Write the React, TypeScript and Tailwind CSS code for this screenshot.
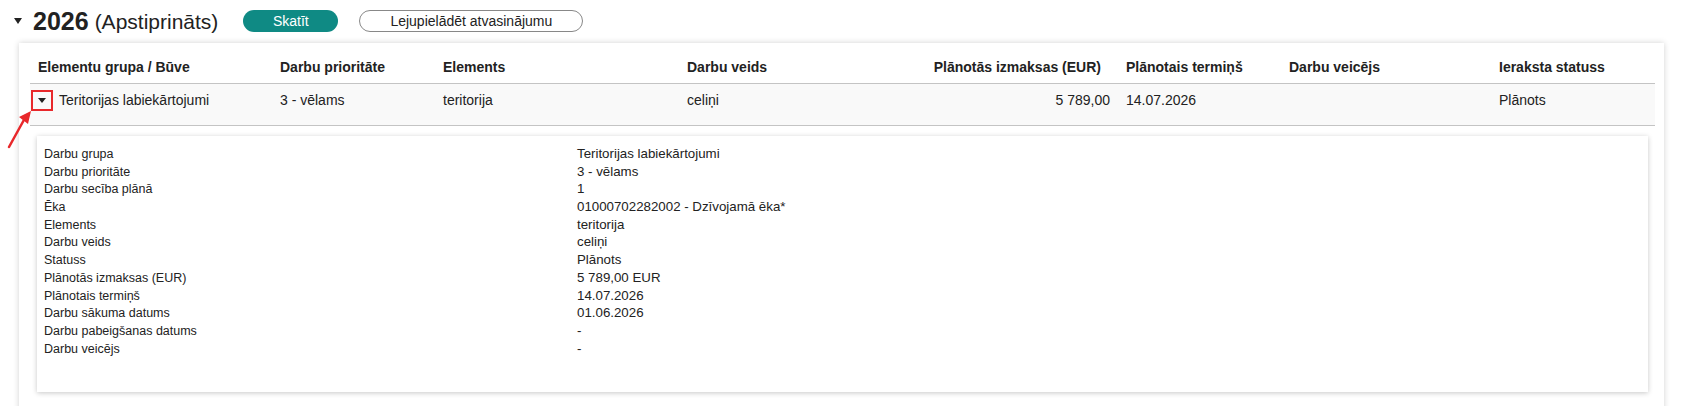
import React from 'react';

type Col = { title: string; align?: 'right' };

const columns: Col[] = [
  { title: 'Elementu grupa / Būve' },
  { title: 'Darbu prioritāte' },
  { title: 'Elements' },
  { title: 'Darbu veids' },
  { title: 'Plānotās izmaksas (EUR)', align: 'right' },
  { title: 'Plānotais termiņš' },
  { title: 'Darbu veicējs' },
  { title: 'Ieraksta statuss' },
];

const details: [string, string][] = [
  ['Darbu grupa', 'Teritorijas labiekārtojumi'],
  ['Darbu prioritāte', '3 - vēlams'],
  ['Darbu secība plānā', '1'],
  ['Ēka', '01000702282002 - Dzīvojamā ēka*'],
  ['Elements', 'teritorija'],
  ['Darbu veids', 'celiņi'],
  ['Statuss', 'Plānots'],
  ['Plānotās izmaksas (EUR)', '5 789,00 EUR'],
  ['Plānotais termiņš', '14.07.2026'],
  ['Darbu sākuma datums', '01.06.2026'],
  ['Darbu pabeigšanas datums', '-'],
  ['Darbu veicējs', '-'],
];

const gridCols = 'grid grid-cols-[242px_163px_244px_226px_213px_163px_210px_164px]';

export default function App() {
  return (
    <div className="relative h-[406px] w-[1691px] overflow-hidden bg-white text-[#222] font-['Liberation_Sans',Arial,sans-serif]">
      {/* Year heading */}
      <div className="flex h-[43px] items-center pl-[14px] pb-[1px]">
        <span className="mr-[11px] h-0 w-0 border-x-[4px] border-t-[6px] border-x-transparent border-t-[#222]" />
        <span className="text-[25px] font-bold leading-none">2026</span>
        <span className="ml-[6px] text-[21px] leading-none">(Apstiprināts)</span>
        <button className="ml-[25px] h-[22px] w-[95px] rounded-full bg-[#0f8a84] text-[14px] text-white">
          Skatīt
        </button>
        <button className="ml-[21px] h-[22px] w-[224px] rounded-full border border-[#888] bg-white text-[14px] text-[#222]">
          Lejupielādēt atvasinājumu
        </button>
      </div>

      {/* Card */}
      <div className="ml-[19px] w-[1645px] bg-white pl-[11px] pr-[9px] pb-[20px] shadow-[0_0_6px_rgba(0,0,0,0.18)]">
        {/* Header */}
        <div className={`${gridCols} border-b border-[#c4c4c4] pt-[16px] pb-[7px] text-[14px] font-bold leading-[17px]`}>
          {columns.map((c) => (
            <div key={c.title} className={c.align === 'right' ? 'pr-[17px] text-right' : 'pl-[8px]'}>
              {c.title}
            </div>
          ))}
        </div>

        {/* Row */}
        <div className={`${gridCols} h-[42px] border-b border-[#c4c4c4] bg-[#f9f9f9] pt-[6px] text-[14px] leading-[20px]`}>
          <div className="relative pl-[29px]">
            <span className="absolute left-[1px] top-[0px] flex h-[21px] w-[22px] items-center justify-center border-2 border-[#e8282b]">
              <span className="h-0 w-0 border-x-[4px] border-t-[5px] border-x-transparent border-t-[#222]" />
            </span>
            Teritorijas labiekārtojumi
          </div>
          <div className="pl-[8px]">3 - vēlams</div>
          <div className="pl-[8px]">teritorija</div>
          <div className="pl-[8px]">celiņi</div>
          <div className="pr-[8px] text-right">5 789,00</div>
          <div className="pl-[8px]">14.07.2026</div>
          <div className="pl-[8px]"></div>
          <div className="pl-[8px]">Plānots</div>
        </div>

        {/* Expanded detail */}
        <div className="mx-[7px] mt-[10px] bg-white pl-[7px] pt-[9px] pb-[35px] shadow-[0_1px_5px_rgba(0,0,0,0.22)]">
          {details.map(([label, value]) => (
            <div key={label} className="grid h-[17.7px] grid-cols-[533px_1fr] items-baseline overflow-visible leading-[17px]">
              <div className="text-[12.5px]">{label}</div>
              <div className="text-[13.3px]">{value}</div>
            </div>
          ))}
        </div>
      </div>

      {/* Annotation arrow */}
      <svg className="absolute left-0 top-0" width="60" height="160" viewBox="0 0 60 160">
        <line x1="9" y1="147" x2="25" y2="118" stroke="#e8282b" strokeWidth="2.5" strokeLinecap="round" />
        <polygon points="31,111 19,117 28,124" fill="#e8282b" />
      </svg>
    </div>
  );
}
